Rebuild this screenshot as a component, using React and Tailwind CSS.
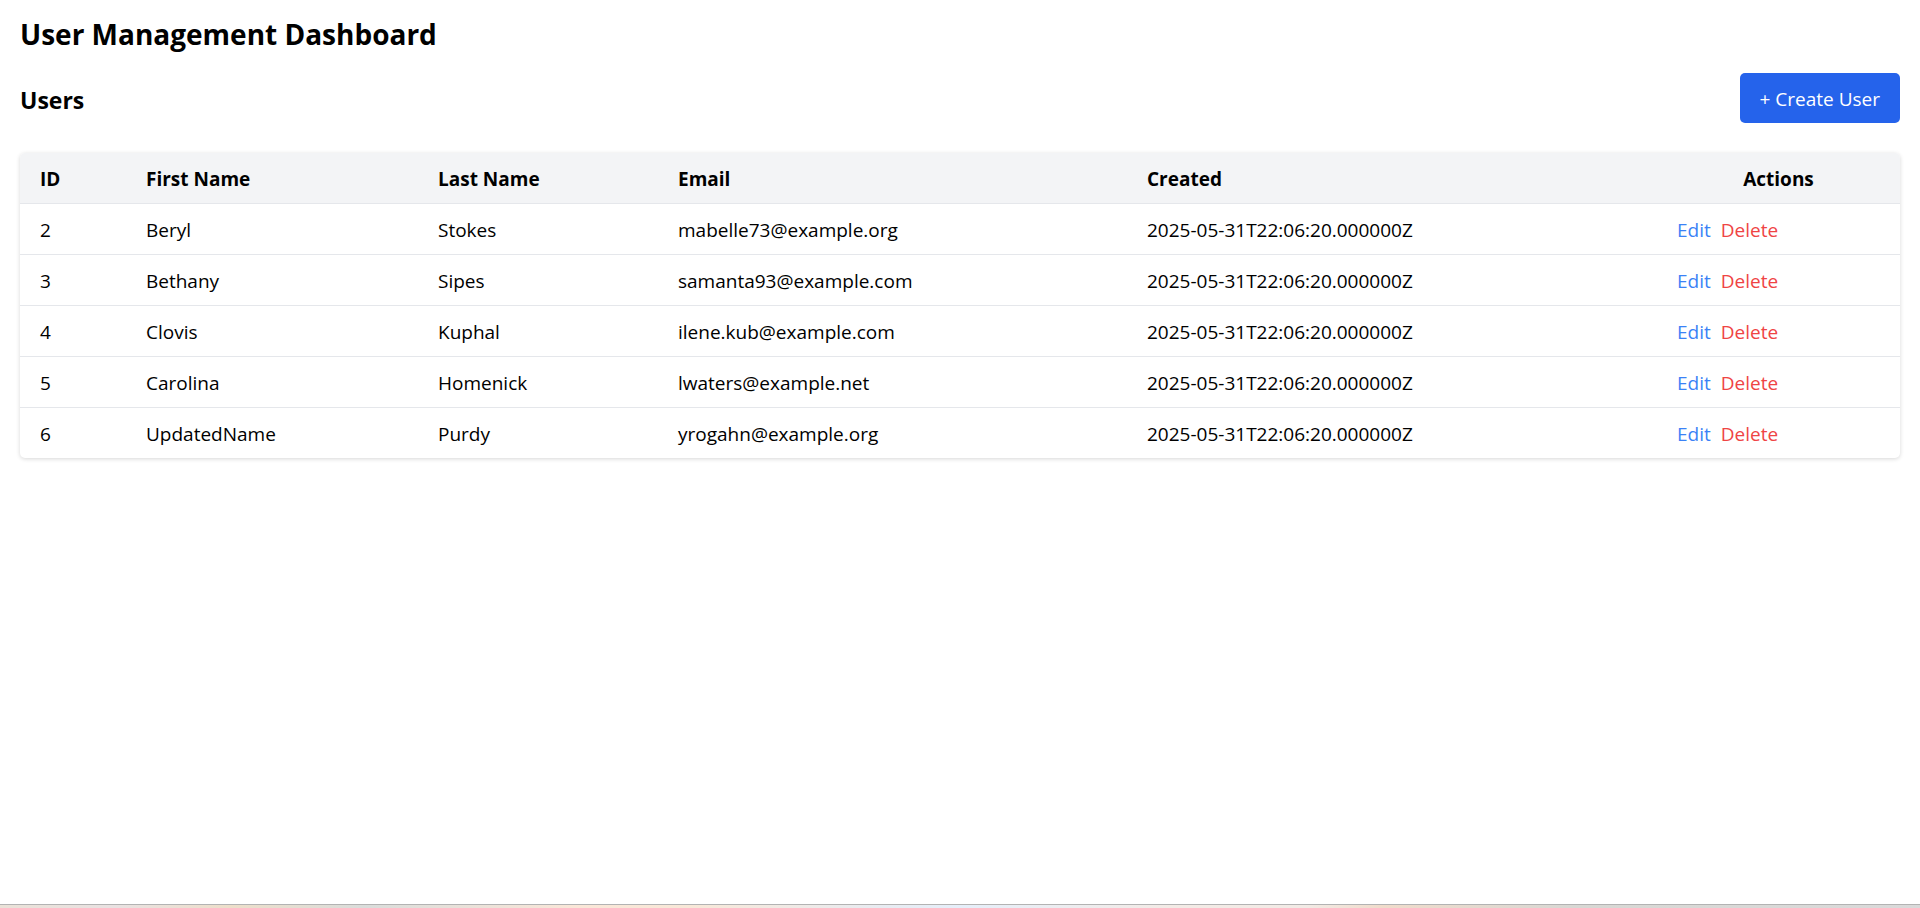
const users = [
  { id: 2, first: 'Beryl', last: 'Stokes', email: 'mabelle73@example.org' },
  { id: 3, first: 'Bethany', last: 'Sipes', email: 'samanta93@example.com' },
  { id: 4, first: 'Clovis', last: 'Kuphal', email: 'ilene.kub@example.com' },
  { id: 5, first: 'Carolina', last: 'Homenick', email: 'lwaters@example.net' },
  { id: 6, first: 'UpdatedName', last: 'Purdy', email: 'yrogahn@example.org' },
];

const created = '2025-05-31T22:06:20.000000Z';
const cell = 'px-5 pt-[13px] pb-[11px]';

function UserRow({ user }) {
  return (
    <tr className="border-b border-gray-200 last:border-b-0">
      <td className={cell}>{user.id}</td>
      <td className={cell}>{user.first}</td>
      <td className={cell}>{user.last}</td>
      <td className={cell}>{user.email}</td>
      <td className={cell}>{created}</td>
      <td className={cell}>
        <div className="flex gap-2.5">
          <button type="button" className="text-[#3b82f6]">Edit</button>
          <button type="button" className="text-[#ef4444]">Delete</button>
        </div>
      </td>
    </tr>
  );
}

export default function App() {
  return (
    <div className="flex min-h-screen flex-col bg-white font-['Segoe_UI','Open_Sans',sans-serif] text-[19px] leading-[26px] text-black">
      <main className="grow px-5 pt-[14px]">
        <h1 className="mb-[19px] text-[28px] leading-10 font-bold">User Management Dashboard</h1>
        <div className="mb-[30px] flex items-center justify-between">
          <h2 className="pt-1 text-[23px] leading-8 font-bold">Users</h2>
          <button type="button" className="rounded-[5px] bg-[#2563eb] px-5 pt-[13px] pb-[11px] text-white">
            + Create User
          </button>
        </div>
        <div className="overflow-hidden rounded-[5px] shadow-[0_1px_4px_rgba(0,0,0,0.16)]">
          <table className="w-full table-fixed border-collapse text-left">
            <thead className="bg-gray-100">
              <tr className="border-b border-gray-200">
                <th className="w-[106px] px-5 pt-[13px] pb-[11px] font-bold">ID</th>
                <th className="w-[292px] px-5 pt-[13px] pb-[11px] font-bold">First Name</th>
                <th className="w-[240px] px-5 pt-[13px] pb-[11px] font-bold">Last Name</th>
                <th className="w-[469px] px-5 pt-[13px] pb-[11px] font-bold">Email</th>
                <th className="w-[530px] px-5 pt-[13px] pb-[11px] font-bold">Created</th>
                <th className="w-[243px] px-5 pt-[13px] pb-[11px] text-center font-bold">Actions</th>
              </tr>
            </thead>
            <tbody>
              {users.map((user) => (
                <UserRow key={user.id} user={user} />
              ))}
            </tbody>
          </table>
        </div>
      </main>
      <footer className="h-1 border-t border-[#b3b3b3] bg-[linear-gradient(to_right,#eae2d8_0%,#e9e2e2_6%,#eddfca_12%,#dadddb_19%,#fae7d8_30%,#f8e8d8_36%,#e8ecf2_46%,#e6effa_50%,#f3ebe6_61%,#f2ebe6_68%,#f0dccb_72%,#d8d8d4_82%,#dadada_100%)]" />
    </div>
  );
}
